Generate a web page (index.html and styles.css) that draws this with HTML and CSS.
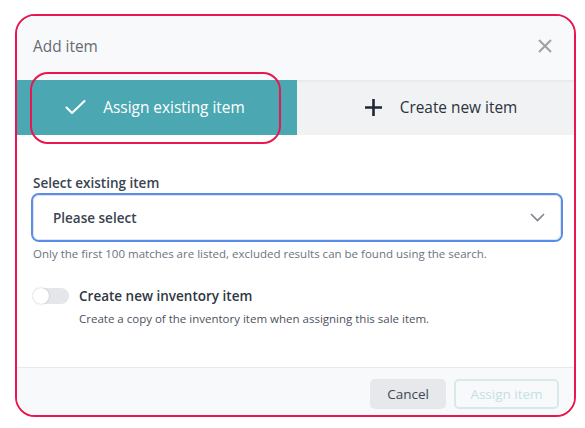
FILE: index.html
```html
<!DOCTYPE html>
<html>
<head>
<meta charset="utf-8">
<link rel="stylesheet" href="styles.css">
</head>
<body>
<div class="modal">
  <div class="header">
    <span class="title">Add item</span>
    <svg class="close" width="14" height="14" viewBox="0 0 14 14"><path d="M1 1L13 13M13 1L1 13" stroke="#9aa1a9" stroke-width="2" fill="none"/></svg>
  </div>
  <div class="tabs">
    <div class="tab active">
      <svg class="check" width="21" height="15" viewBox="0 0 21 15"><path d="M1.5 7.5L7 13L19.5 1" stroke="#fff" stroke-width="2" fill="none" stroke-linecap="round" stroke-linejoin="round"/></svg>
      <span>Assign existing item</span>
    </div>
    <div class="tab">
      <svg class="plus" width="19" height="19" viewBox="0 0 19 19"><path d="M9.5 1V18M1 9.5H18" stroke="#1f2733" stroke-width="2.6" fill="none"/></svg>
      <span>Create new item</span>
    </div>
    <div class="highlight"></div>
  </div>
  <div class="body">
    <label class="label">Select existing item</label>
    <div class="select">
      <span class="placeholder">Please select</span>
      <svg width="15" height="9" viewBox="0 0 15 9"><path d="M1 1L7.5 7.5L14 1" stroke="#7d848c" stroke-width="1.6" fill="none"/></svg>
    </div>
    <p class="help">Only the first 100 matches are listed, excluded results can be found using the search.</p>
    <div class="toggle-row">
      <div class="toggle"><div class="knob"></div></div>
      <div class="toggle-text">
        <div class="toggle-title">Create new inventory item</div>
        <div class="toggle-desc">Create a copy of the inventory item when assigning this sale item.</div>
      </div>
    </div>
  </div>
  <div class="footer">
    <button class="btn cancel">Cancel</button>
    <button class="btn assign" disabled>Assign item</button>
  </div>
</div>
</body>
</html>
```
FILE: styles.css
```css
* { box-sizing: border-box; }
html, body { margin: 0; padding: 0; background: #fff; }
body {
  font-family: "Open Sans", "Liberation Sans", sans-serif;
  padding: 14px 0 0 15px;
}
.modal {
  width: 561px;
  height: 403px;
  border: 2px solid #e8174f;
  border-radius: 20px;
  overflow: hidden;
  display: flex;
  flex-direction: column;
  background: #fff;
}
.header {
  height: 64px;
  flex: none;
  background: #f8f9fb;
  display: flex;
  justify-content: space-between;
  align-items: flex-start;
  padding: 22px 22px 0 16px;
}
.title {
  font-size: 15.4px;
  line-height: 24px;
  color: #646b74;
  margin-top: -3px;
}
.close { margin-top: 1px; }
.tabs {
  position: relative;
  height: 55px;
  flex: none;
  display: flex;
}
.tab {
  flex: 1;
  display: flex;
  align-items: center;
  justify-content: center;
  gap: 17px;
  background: #f1f2f4;
  color: #2b333e;
  font-size: 15.4px;
  box-shadow: inset 0 3px 3px -2px rgba(0,0,0,0.06);
}
.tab.active {
  flex: 0 0 280px;
  background: #4ba8b3;
  color: #fff;
  box-shadow: none;
  padding-right: 4px;
}
.tab:not(.active) { padding-left: 10px; }
.highlight {
  position: absolute;
  left: 13px;
  top: -8px;
  width: 251px;
  height: 72px;
  border: 2px solid #e8174f;
  border-radius: 18px;
}
.body {
  flex: 1;
  padding: 38px 13px 0 16px;
}
.label {
  display: block;
  font-size: 13.5px;
  line-height: 20px;
  font-weight: 600;
  color: #3a4350;
}
.select {
  margin-top: 2px;
  height: 45px;
  border: 1px solid #e1e4e8;
  border-radius: 6px;
  box-shadow: 0 0 0 2px #5a8cec;
  display: flex;
  align-items: center;
  justify-content: space-between;
  padding: 0 15px 0 19px;
}
.placeholder {
  font-size: 13.5px;
  font-weight: 600;
  color: #3a4350;
}
.help {
  margin: 6px 0 0;
  font-size: 11.5px;
  line-height: 16px;
  color: #6b7380;
}
.toggle-row {
  margin-top: 24px;
  display: flex;
  align-items: flex-start;
  gap: 10px;
}
.toggle {
  margin-top: 2px;
  width: 36px;
  height: 16px;
  border-radius: 8px;
  background: #e4e6ea;
  position: relative;
  flex: none;
}
.knob {
  position: absolute;
  left: 0;
  top: 0;
  width: 16px;
  height: 16px;
  border-radius: 50%;
  background: #fff;
  box-shadow: 0 0 2px rgba(0,0,0,0.25);
}
.toggle-title {
  font-size: 13.5px;
  line-height: 20px;
  font-weight: 600;
  color: #2f3742;
}
.toggle-desc {
  margin-top: 5px;
  font-size: 11.5px;
  line-height: 16px;
  color: #4b535e;
}
.footer {
  height: 48px;
  flex: none;
  border-top: 1px solid #e7e9ec;
  background: #f8f9fb;
  display: flex;
  justify-content: flex-end;
  align-items: center;
  gap: 8px;
  padding: 4px 15px 0 0;
}
.btn {
  font-family: inherit;
  font-size: 13.5px;
  height: 30px;
  border-radius: 5px;
  padding: 0;
}
.cancel {
  width: 76px;
  border: none;
  background: #e6e8eb;
  color: #3f4752;
}
.assign {
  width: 105px;
  border: 2px solid #d6eaec;
  background: transparent;
  color: #c3e1e5;
}
```
